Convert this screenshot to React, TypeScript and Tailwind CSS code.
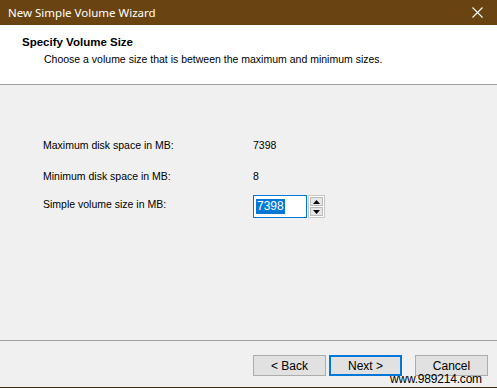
import React from 'react';

const ui = { fontFamily: '"Liberation Sans", Arial, sans-serif' };

const WizardButton: React.FC<{ label: string; primary?: boolean }> = ({ label, primary }) => (
  <button
    className={`h-[21px] w-[73px] text-[12px] text-black bg-[#e1e1e1] flex items-center justify-center ${
      primary ? 'border-2 border-[#0078d7]' : 'border border-[#adadad]'
    }`}
  >
    {label}
  </button>
);

export default function App() {
  return (
    <div className="w-[497px] h-[388px] flex flex-col bg-[#f0f0f0] relative overflow-hidden" style={ui}>
      {/* Title bar */}
      <div className="h-[25px] bg-[#694410] flex items-center justify-between pl-[8px] pr-[14px] shrink-0">
        <span className="text-white text-[11.5px]" style={{ fontFamily: '"Noto Sans", sans-serif' }}>
          New Simple Volume Wizard
        </span>
        <svg width="11" height="11" viewBox="0 0 11 11" className="mt-[-1px]">
          <path d="M0.5 0.5 L10.5 10.5 M10.5 0.5 L0.5 10.5" stroke="white" strokeWidth="1.1" />
        </svg>
      </div>

      {/* Header */}
      <div className="h-[60px] bg-white border-b border-[#a0a0a0] pl-[22px] pt-[10px] shrink-0">
        <div className="text-[11.5px] font-bold text-black leading-[15px]">Specify Volume Size</div>
        <div className="text-[10.5px] text-black leading-[14px] pl-[22px] pt-[2px]">
          Choose a volume size that is between the maximum and minimum sizes.
        </div>
      </div>

      {/* Body */}
      <div className="flex-1 pl-[43px] pt-[54px] text-[10.5px] text-black">
        <div className="flex items-center h-[14px]">
          <span className="w-[210px]">Maximum disk space in MB:</span>
          <span>7398</span>
        </div>
        <div className="flex items-center h-[14px] mt-[17px]">
          <span className="w-[210px]">Minimum disk space in MB:</span>
          <span>8</span>
        </div>
        <div className="flex items-center mt-[11px]">
          <span className="w-[210px] -mt-[4px]">Simple volume size in MB:</span>
          <div className="h-[23px] w-[54px] border border-[#0078d7] bg-white flex items-center pl-[2px]">
            <span className="bg-[#0078d7] text-white text-[12px] leading-[15px] px-[1px]">7398</span>
          </div>
          <div className="h-[23px] w-[17px] ml-[1px] flex flex-col gap-[1px] border border-[#c8c8c8] bg-white p-[1px]">
            <div className="flex-1 bg-[#e5e5e5] border border-[#bcbcbc] flex items-center justify-center">
              <svg width="7" height="4" viewBox="0 0 7 4"><path d="M3.5 0 L7 4 L0 4 Z" fill="black" /></svg>
            </div>
            <div className="flex-1 bg-[#e5e5e5] border border-[#bcbcbc] flex items-center justify-center">
              <svg width="7" height="4" viewBox="0 0 7 4"><path d="M0 0 L7 0 L3.5 4 Z" fill="black" /></svg>
            </div>
          </div>
        </div>
      </div>

      {/* Footer */}
      <div className="h-[47px] border-t border-[#a0a0a0] shrink-0 flex items-start pt-[14px] pl-[253px]">
        <WizardButton label="< Back" />
        <div className="ml-[3px]">
          <WizardButton label="Next >" primary />
        </div>
        <div className="ml-[13px]">
          <WizardButton label="Cancel" />
        </div>
      </div>
      <div className="h-[1px] bg-[#3a2c14] shrink-0" />

      <span className="absolute left-[390px] top-[373px] text-[12px] text-black leading-[13px] tracking-[-0.2px]">
        www.989214.com
      </span>
    </div>
  );
}
